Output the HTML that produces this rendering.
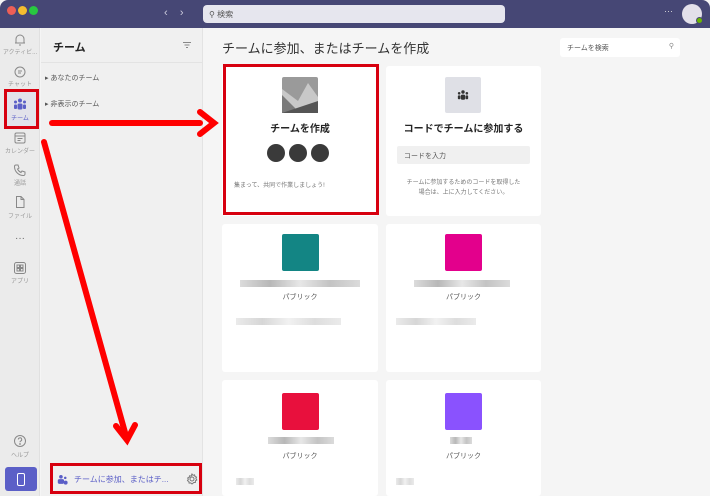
<!DOCTYPE html>
<html><head><meta charset="utf-8"><style>
*{margin:0;padding:0;box-sizing:border-box}
body{width:710px;height:496px;overflow:hidden;font-family:"Liberation Sans","Noto Sans CJK JP",sans-serif;background:#f5f5f5;position:relative;color:#242424}
.abs{position:absolute}
.title{left:0;top:0;width:710px;height:28px;background:#464775;border-radius:8px 8px 0 0}
.dot{top:6px;width:9px;height:9px;border-radius:50%}
.rail{left:0;top:28px;width:40px;height:468px;background:#ebebeb;border-right:1px solid #e0e0e0}
.ri{width:40px;text-align:center;font-size:6px;color:#999}
.ic{position:absolute;left:13px}
.side{left:41px;top:28px;width:162px;height:468px;background:#f0f0f0;border-right:1px solid #e3e3e3}
.card{background:#fff;border-radius:3px}
.lbl{font-size:7px;color:#555;text-align:center;width:100%}
.blur{background:linear-gradient(90deg,#ccc,#999,#ddd,#aaa,#ccc);height:7px;opacity:.7}
</style></head><body>
<div class="abs title"></div>
<div class="abs dot" style="left:7px;background:#ee5f57"></div>
<div class="abs dot" style="left:18px;background:#f5bd2f"></div>
<div class="abs dot" style="left:29px;background:#28c840"></div>
<div class="abs" style="left:164px;top:7px;color:#ccd;font-size:11px">‹&nbsp;&nbsp;&nbsp;&nbsp;›</div>
<div class="abs" style="left:203px;top:5px;width:302px;height:18px;background:#e6e6ee;border-radius:4px;font-size:8px;color:#555;padding:4px 0 0 6px">⚲ 検索</div>
<div class="abs" style="left:664px;top:6px;color:#ddd;font-size:9px">···</div>
<div class="abs" style="left:682px;top:4px;width:20px;height:20px;border-radius:50%;background:#e3e0ea"></div>
<div class="abs" style="left:696px;top:17px;width:7px;height:7px;border-radius:50%;background:#6bb700;border:1px solid #464775"></div>

<div class="abs rail"></div>
<svg class="ic" style="top:33px" width="14" height="14" viewBox="0 0 14 14" fill="none" stroke="#888" stroke-width="1"><path d="M3 10V6a4 4 0 0 1 8 0v4zM2 10h10M6 12h2"/></svg>
<div class="abs ri" style="top:47px">アクティビ...</div>
<svg class="ic" style="top:65px" width="14" height="14" viewBox="0 0 14 14" fill="none" stroke="#888" stroke-width="1"><circle cx="7" cy="7" r="5"/><path d="M5 6h4M5 8h3"/></svg>
<div class="abs ri" style="top:79px">チャット</div>
<div class="abs" style="left:5px;top:90px;width:33px;height:38px;background:#e2e2ea"></div>
<svg class="ic" style="top:97px" width="14" height="14" viewBox="0 0 14 14" fill="#5b5fc7"><circle cx="7" cy="3.5" r="2"/><circle cx="2.5" cy="5" r="1.5"/><circle cx="11.5" cy="5" r="1.5"/><rect x="4.5" y="6.5" width="5" height="6" rx="1.5"/><rect x="1" y="7.5" width="3" height="4.5" rx="1"/><rect x="10" y="7.5" width="3" height="4.5" rx="1"/></svg>
<div class="abs ri" style="top:113px;color:#5b5fc7">チーム</div>
<svg class="ic" style="top:131px" width="14" height="14" viewBox="0 0 14 14" fill="none" stroke="#888" stroke-width="1"><rect x="2" y="2" width="10" height="10" rx="1.5"/><path d="M2 5h10M4.5 7.5h5M4.5 9.5h3"/></svg>
<div class="abs ri" style="top:146px">カレンダー</div>
<svg class="ic" style="top:163px" width="14" height="14" viewBox="0 0 14 14" fill="none" stroke="#888" stroke-width="1"><path d="M3 2l2 0 1 3-1.5 1a7 7 0 0 0 3.5 3.5l1-1.5 3 1v2a1.5 1.5 0 0 1-1.5 1.5A9 9 0 0 1 1.5 3.5 1.5 1.5 0 0 1 3 2z"/></svg>
<div class="abs ri" style="top:178px">通話</div>
<svg class="ic" style="top:195px" width="14" height="14" viewBox="0 0 14 14" fill="none" stroke="#888" stroke-width="1"><path d="M3.5 1.5h4.5l3 3v8h-7.5zM8 1.5v3h3"/></svg>
<div class="abs ri" style="top:211px">ファイル</div>
<div class="abs ri" style="top:233px;font-size:10px;color:#666">···</div>
<svg class="ic" style="top:261px" width="14" height="14" viewBox="0 0 14 14" fill="none" stroke="#888" stroke-width="1"><rect x="1.5" y="1.5" width="11" height="11" rx="2"/><rect x="4" y="4" width="2.5" height="2.5"/><rect x="7.5" y="4" width="2.5" height="2.5"/><rect x="4" y="7.5" width="2.5" height="2.5"/><rect x="7.5" y="7.5" width="2.5" height="2.5"/></svg>
<div class="abs ri" style="top:276px">アプリ</div>
<svg class="ic" style="top:434px" width="14" height="14" viewBox="0 0 14 14" fill="none" stroke="#888" stroke-width="1"><circle cx="7" cy="7" r="5.5"/><path d="M5.3 5.5a1.7 1.7 0 1 1 2.3 1.6c-.5.2-.6.6-.6 1.2"/><circle cx="7" cy="10" r=".4"/></svg>
<div class="abs ri" style="top:450px">ヘルプ</div>
<div class="abs" style="left:5px;top:467px;width:32px;height:24px;background:#5b5fc7;border-radius:3px"></div>
<svg class="abs" style="left:16px;top:473px" width="10" height="13" viewBox="0 0 10 13" fill="none" stroke="#fff" stroke-width="1"><rect x="1.5" y="0.5" width="7" height="12" rx="1.5"/></svg>

<div class="abs side"></div>
<div class="abs" style="left:53px;top:39px;font-size:11px;font-weight:bold">チーム</div>
<svg class="abs" style="left:182px;top:41px" width="10" height="8" stroke="#888" stroke-width="1"><path d="M1 1.5h8M2.5 4h5M4 6.5h2"/></svg>
<div class="abs" style="left:41px;top:62px;width:162px;height:1px;background:#e3e3e3"></div>
<div class="abs" style="left:45px;top:73px;font-size:7px;color:#555">▸ あなたのチーム</div>
<div class="abs" style="left:45px;top:99px;font-size:7px;color:#555">▸ 非表示のチーム</div>
<svg class="abs" style="left:57px;top:474px" width="11" height="11" viewBox="0 0 14 14" fill="#5b5fc7"><circle cx="5" cy="3.5" r="2.3"/><circle cx="10.5" cy="5" r="1.6"/><rect x="1" y="6.5" width="8" height="6" rx="2"/><circle cx="11" cy="11" r="2.5"/></svg>
<div class="abs" style="left:74px;top:474px;font-size:8px;color:#5b5fc7">チームに参加、またはチ...</div>
<svg class="abs" style="left:186px;top:473px" width="12" height="12" viewBox="0 0 12 12" fill="none" stroke="#777" stroke-width="1"><circle cx="6" cy="6" r="2"/><path d="M6 1l1 1.3 1.6-.4.4 1.6 1.5.6-.6 1.5.9 1.4-1.4.8v1.6l-1.6.1L6 11l-1.3-1.1-1.6.2-.2-1.6-1.4-.8.8-1.4L1.7 5l1.5-.6.3-1.6 1.6.3z"/></svg>

<div class="abs" style="left:222px;top:38px;font-size:13px;color:#333">チームに参加、またはチームを作成</div>
<div class="abs" style="left:560px;top:38px;width:120px;height:19px;background:#fff;border-radius:3px;font-size:7px;color:#555;padding:5px 0 0 7px">チームを検索<span style="position:absolute;right:6px;top:4px;color:#888">⚲</span></div>

<div class="abs card" style="left:222px;top:66px;width:156px;height:150px"></div>
<svg class="abs" style="left:282px;top:77px" width="36" height="36" viewBox="0 0 36 36"><rect width="36" height="36" rx="2" fill="#9a9a9a"/><path d="M0 12l16 12 10-18 10 14V36H0z" fill="#c8c8c8"/><path d="M0 18l18 18H0z" fill="#7a7a7a"/><path d="M0 36l36-12v12z" fill="#555"/></svg>
<div class="abs" style="left:222px;top:120px;width:156px;text-align:center;font-size:10px;font-weight:bold">チームを作成</div>
<div class="abs" style="left:267px;top:144px;width:66px;display:flex;gap:4px"><span style="width:18px;height:18px;border-radius:50%;background:#3a3a3a"></span><span style="width:18px;height:18px;border-radius:50%;background:#3a3a3a"></span><span style="width:18px;height:18px;border-radius:50%;background:#3a3a3a"></span></div>
<div class="abs" style="left:234px;top:180px;font-size:6px;color:#777">集まって、共同で作業しましょう!</div>

<div class="abs card" style="left:386px;top:66px;width:155px;height:150px"></div>
<div class="abs" style="left:445px;top:77px;width:36px;height:36px;background:#dfe0e6;border-radius:2px"></div>
<svg class="abs" style="left:457px;top:89px" width="12" height="12" viewBox="0 0 14 14" fill="#333"><circle cx="7" cy="3.5" r="2"/><circle cx="2.5" cy="5" r="1.5"/><circle cx="11.5" cy="5" r="1.5"/><rect x="4.5" y="6.5" width="5" height="6" rx="1.5"/><rect x="1" y="7.5" width="3" height="4.5" rx="1"/><rect x="10" y="7.5" width="3" height="4.5" rx="1"/></svg>
<div class="abs" style="left:386px;top:120px;width:155px;text-align:center;font-size:10px;font-weight:bold">コードでチームに参加する</div>
<div class="abs" style="left:397px;top:146px;width:133px;height:18px;background:#f0f0f0;border-radius:2px;font-size:7px;color:#555;padding:5px 0 0 7px">コードを入力</div>
<div class="abs" style="left:390px;top:178px;width:147px;text-align:center;font-size:6px;color:#777;line-height:10px">チームに参加するためのコードを取得した<br>場合は、上に入力してください。</div>

<div class="abs card" style="left:222px;top:224px;width:156px;height:148px"></div>
<div class="abs" style="left:282px;top:234px;width:37px;height:37px;background:#138584;border-radius:2px"></div>
<div class="abs blur" style="left:240px;top:280px;width:120px"></div>
<div class="abs lbl" style="left:222px;top:292px;width:156px">パブリック</div>
<div class="abs blur" style="left:236px;top:318px;width:105px;opacity:.4"></div>

<div class="abs card" style="left:386px;top:224px;width:155px;height:148px"></div>
<div class="abs" style="left:445px;top:234px;width:37px;height:37px;background:#e3008c;border-radius:2px"></div>
<div class="abs blur" style="left:414px;top:280px;width:96px"></div>
<div class="abs lbl" style="left:386px;top:292px;width:155px">パブリック</div>
<div class="abs blur" style="left:396px;top:318px;width:80px;opacity:.4"></div>

<div class="abs card" style="left:222px;top:380px;width:156px;height:116px"></div>
<div class="abs" style="left:282px;top:393px;width:37px;height:37px;background:#e8103d;border-radius:2px"></div>
<div class="abs blur" style="left:268px;top:437px;width:66px"></div>
<div class="abs lbl" style="left:222px;top:451px;width:156px">パブリック</div>
<div class="abs blur" style="left:236px;top:478px;width:18px;opacity:.4"></div>

<div class="abs card" style="left:386px;top:380px;width:155px;height:116px"></div>
<div class="abs" style="left:445px;top:393px;width:37px;height:37px;background:#8a52fe;border-radius:2px"></div>
<div class="abs blur" style="left:450px;top:437px;width:22px"></div>
<div class="abs lbl" style="left:386px;top:451px;width:155px">パブリック</div>
<div class="abs blur" style="left:396px;top:478px;width:18px;opacity:.4"></div>

<svg class="abs" style="left:0;top:0" width="710" height="496">
<g fill="none" stroke="#d7000f" stroke-width="3">
<rect x="5.5" y="90.5" width="32" height="37"/>
<rect x="224.5" y="65.5" width="153" height="148"/>
<rect x="51.5" y="464.5" width="149" height="28"/>
</g>
<g stroke="#f00" stroke-width="6" stroke-linecap="round" fill="none">
<line x1="52" y1="123" x2="200" y2="123"/>
<polyline points="200,112 214,123 200,134"/>
<line x1="44" y1="142" x2="126" y2="436"/>
<polyline points="116,426 127,440 135,425"/>
</g>
</svg>
</body></html>
